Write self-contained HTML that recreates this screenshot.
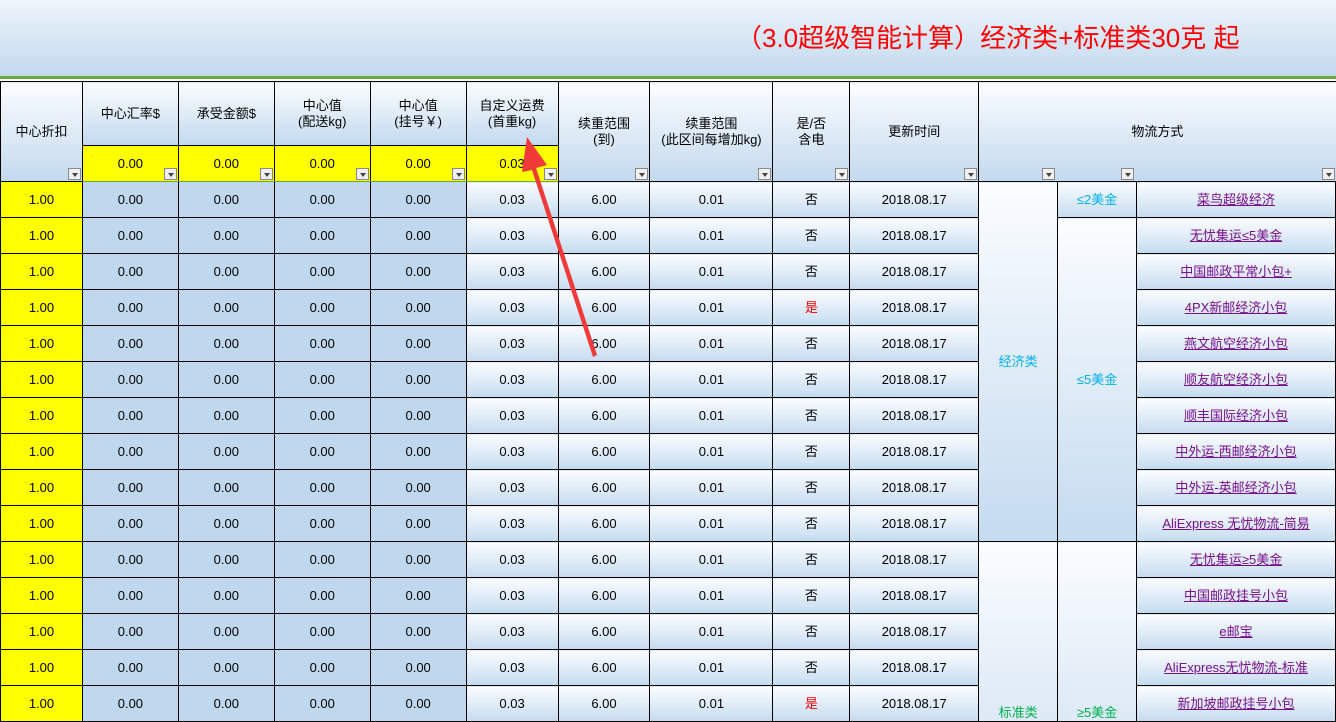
<!DOCTYPE html>
<html><head><meta charset="utf-8"><style>
body{margin:0;width:1336px;height:710px;overflow:hidden;background:#fff;font-family:"Liberation Sans","Noto Sans CJK SC",sans-serif;font-size:13px;color:#000;position:relative}
.top{position:absolute;left:0;top:0;width:1336px;height:79px;background:linear-gradient(#eef4fb,#c3d9ee);border-bottom:3px solid #6aa842;box-sizing:border-box}
.title{position:absolute;left:736px;top:18px;font-size:26px;color:#ff0000;white-space:nowrap}
table{position:absolute;left:0;top:81px;border-collapse:collapse;table-layout:fixed}
td{border:1px solid #000;text-align:center;padding:0;height:35px;line-height:16px;position:relative;white-space:nowrap;overflow:hidden}
.h{background:linear-gradient(#fbfdff,#c3d9ee)}
.y{background:#ffff00}
.b{background:#c0d8ee}
.g{background:linear-gradient(#fbfdff,#c5dbf0)}
.m{background:linear-gradient(#fbfdff,#c5dbf0)}
.lk{color:#7a0f8f;text-decoration:underline}
.dd{position:absolute;right:1px;bottom:1px;width:13px;height:12px;background:#f0f0f0;border:1px solid #888;box-sizing:border-box}
.dd:after{content:"";position:absolute;left:3px;top:4px;border-left:3px solid transparent;border-right:3px solid transparent;border-top:4px solid #444}
tr.hd td{border-bottom-color:#6aa842}
</style></head><body>
<div class="top"><div class="title">（3.0超级智能计算）经济类+标准类30克 起</div></div>
<table>
<colgroup><col style="width:82px"><col style="width:96px"><col style="width:96px"><col style="width:96px"><col style="width:96px"><col style="width:92px"><col style="width:92px"><col style="width:123px"><col style="width:77px"><col style="width:129px"><col style="width:79px"><col style="width:79px"><col style="width:199px"></colgroup>
<tr><td class="h" rowspan="2" style="height:99px">中心折扣<span class="dd"></span></td><td class="h" style="height:63px">中心汇率$</td><td class="h">承受金额$</td><td class="h">中心值<br>(配送kg)</td><td class="h">中心值<br>(挂号￥)</td><td class="h">自定义运费<br>(首重kg)</td><td class="h" rowspan="2">续重范围<br>(到)<span class="dd"></span></td><td class="h" rowspan="2">续重范围<br>(此区间每增加kg)<span class="dd"></span></td><td class="h" rowspan="2">是/否<br>含电<span class="dd"></span></td><td class="h" rowspan="2">更新时间<span class="dd"></span></td><td class="h" rowspan="2" colspan="3" style="border-right:none">物流方式<span class="dd" style="right:auto;left:63px"></span><span class="dd" style="right:auto;left:142px"></span><span class="dd"></span></td></tr>
<tr class="hd"><td class="y">0.00<span class="dd"></span></td><td class="y">0.00<span class="dd"></span></td><td class="y">0.00<span class="dd"></span></td><td class="y">0.00<span class="dd"></span></td><td class="y">0.03<span class="dd"></span></td></tr>
<tr><td class="y">1.00</td><td class="b">0.00</td><td class="b">0.00</td><td class="b">0.00</td><td class="b">0.00</td><td class="g">0.03</td><td class="g">6.00</td><td class="g">0.01</td><td class="g">否</td><td class="g">2018.08.17</td><td class="m" rowspan="10" style="color:#00b0f0">经济类</td><td class="g" style="color:#00b0f0">≤2美金</td><td class="g"><span class="lk">菜鸟超级经济</span></td></tr>
<tr><td class="y">1.00</td><td class="b">0.00</td><td class="b">0.00</td><td class="b">0.00</td><td class="b">0.00</td><td class="g">0.03</td><td class="g">6.00</td><td class="g">0.01</td><td class="g">否</td><td class="g">2018.08.17</td><td class="m" rowspan="9" style="color:#00b0f0">≤5美金</td><td class="g"><span class="lk">无忧集运≤5美金</span></td></tr>
<tr><td class="y">1.00</td><td class="b">0.00</td><td class="b">0.00</td><td class="b">0.00</td><td class="b">0.00</td><td class="g">0.03</td><td class="g">6.00</td><td class="g">0.01</td><td class="g">否</td><td class="g">2018.08.17</td><td class="g"><span class="lk">中国邮政平常小包+</span></td></tr>
<tr><td class="y">1.00</td><td class="b">0.00</td><td class="b">0.00</td><td class="b">0.00</td><td class="b">0.00</td><td class="g">0.03</td><td class="g">6.00</td><td class="g">0.01</td><td class="g" style="color:#e00">是</td><td class="g">2018.08.17</td><td class="g"><span class="lk">4PX新邮经济小包</span></td></tr>
<tr><td class="y">1.00</td><td class="b">0.00</td><td class="b">0.00</td><td class="b">0.00</td><td class="b">0.00</td><td class="g">0.03</td><td class="g">6.00</td><td class="g">0.01</td><td class="g">否</td><td class="g">2018.08.17</td><td class="g"><span class="lk">燕文航空经济小包</span></td></tr>
<tr><td class="y">1.00</td><td class="b">0.00</td><td class="b">0.00</td><td class="b">0.00</td><td class="b">0.00</td><td class="g">0.03</td><td class="g">6.00</td><td class="g">0.01</td><td class="g">否</td><td class="g">2018.08.17</td><td class="g"><span class="lk">顺友航空经济小包</span></td></tr>
<tr><td class="y">1.00</td><td class="b">0.00</td><td class="b">0.00</td><td class="b">0.00</td><td class="b">0.00</td><td class="g">0.03</td><td class="g">6.00</td><td class="g">0.01</td><td class="g">否</td><td class="g">2018.08.17</td><td class="g"><span class="lk">顺丰国际经济小包</span></td></tr>
<tr><td class="y">1.00</td><td class="b">0.00</td><td class="b">0.00</td><td class="b">0.00</td><td class="b">0.00</td><td class="g">0.03</td><td class="g">6.00</td><td class="g">0.01</td><td class="g">否</td><td class="g">2018.08.17</td><td class="g"><span class="lk">中外运-西邮经济小包</span></td></tr>
<tr><td class="y">1.00</td><td class="b">0.00</td><td class="b">0.00</td><td class="b">0.00</td><td class="b">0.00</td><td class="g">0.03</td><td class="g">6.00</td><td class="g">0.01</td><td class="g">否</td><td class="g">2018.08.17</td><td class="g"><span class="lk">中外运-英邮经济小包</span></td></tr>
<tr><td class="y">1.00</td><td class="b">0.00</td><td class="b">0.00</td><td class="b">0.00</td><td class="b">0.00</td><td class="g">0.03</td><td class="g">6.00</td><td class="g">0.01</td><td class="g">否</td><td class="g">2018.08.17</td><td class="g"><span class="lk">AliExpress 无忧物流-简易</span></td></tr>
<tr><td class="y">1.00</td><td class="b">0.00</td><td class="b">0.00</td><td class="b">0.00</td><td class="b">0.00</td><td class="g">0.03</td><td class="g">6.00</td><td class="g">0.01</td><td class="g">否</td><td class="g">2018.08.17</td><td class="m" rowspan="5" style="color:#00b050;vertical-align:bottom;background:linear-gradient(#fbfdff,#dde9f6)">标准类</td><td class="m" rowspan="5" style="color:#00b050;vertical-align:bottom;background:linear-gradient(#fbfdff,#dde9f6)">≥5美金</td><td class="g"><span class="lk">无忧集运≥5美金</span></td></tr>
<tr><td class="y">1.00</td><td class="b">0.00</td><td class="b">0.00</td><td class="b">0.00</td><td class="b">0.00</td><td class="g">0.03</td><td class="g">6.00</td><td class="g">0.01</td><td class="g">否</td><td class="g">2018.08.17</td><td class="g"><span class="lk">中国邮政挂号小包 </span></td></tr>
<tr><td class="y">1.00</td><td class="b">0.00</td><td class="b">0.00</td><td class="b">0.00</td><td class="b">0.00</td><td class="g">0.03</td><td class="g">6.00</td><td class="g">0.01</td><td class="g">否</td><td class="g">2018.08.17</td><td class="g"><span class="lk">e邮宝</span></td></tr>
<tr><td class="y">1.00</td><td class="b">0.00</td><td class="b">0.00</td><td class="b">0.00</td><td class="b">0.00</td><td class="g">0.03</td><td class="g">6.00</td><td class="g">0.01</td><td class="g">否</td><td class="g">2018.08.17</td><td class="g"><span class="lk">AliExpress无忧物流-标准</span></td></tr>
<tr><td class="y">1.00</td><td class="b">0.00</td><td class="b">0.00</td><td class="b">0.00</td><td class="b">0.00</td><td class="g">0.03</td><td class="g">6.00</td><td class="g">0.01</td><td class="g" style="color:#e00">是</td><td class="g">2018.08.17</td><td class="g"><span class="lk">新加坡邮政挂号小包</span></td></tr>
</table>
<svg style="position:absolute;left:0;top:0" width="1336" height="710"><polygon points="593,357 597,355 536,168 547,165 527,137 522,172 532,170" fill="#f03a3a"/></svg>
</body></html>
